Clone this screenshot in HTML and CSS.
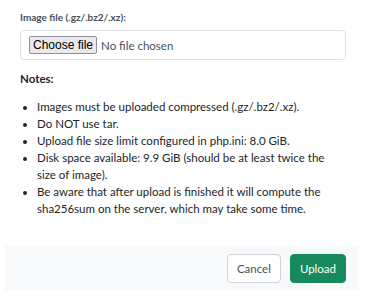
FILE: index.html
```html
<!DOCTYPE html>
<html>
<head>
<meta charset="utf-8">
<link rel="stylesheet" href="styles.css">
</head>
<body>
<div class="modal">
  <div class="modal-body">
    <label class="field-label">Image file (.gz/.bz2/.xz):</label>
    <div class="file-input">
      <span class="file-btn">Choose file</span>
      <span class="file-name">No file chosen</span>
    </div>
    <div class="notes-title">Notes:</div>
    <ul class="notes">
      <li>Images must be uploaded compressed (.gz/.bz2/.xz).</li>
      <li>Do NOT use tar.</li>
      <li>Upload file size limit configured in php.ini: 8.0 GiB.</li>
      <li>Disk space available: 9.9 GiB (should be at least twice the size of image).</li>
      <li>Be aware that after upload is finished it will compute the sha256sum on the server, which may take some time.</li>
    </ul>
  </div>
  <div class="modal-footer">
    <button class="btn btn-cancel">Cancel</button>
    <button class="btn btn-upload">Upload</button>
  </div>
</div>
</body>
</html>
```

FILE: styles.css
```css
html, body {
  margin: 0;
  padding: 0;
  background: #ffffff;
}
body {
  font-family: Lato, "Open Sans", sans-serif;
  color: #212529;
  font-size: 11.5px;
}
.modal {
  width: 353px;
  margin-left: 5px;
}
.modal-body {
  padding: 10px 12px 8px 15px;
}
.field-label {
  display: block;
  font-weight: 700;
  font-size: 10px;
  color: #495057;
  line-height: 14px;
  margin-bottom: 6px;
}
.file-input {
  display: flex;
  align-items: center;
  height: 28px;
  border: 1px solid #dde2e6;
  border-radius: 4px;
  padding: 0 8px;
  gap: 4px;
}
.file-btn {
  font-family: "Liberation Sans", Arial, sans-serif;
  font-size: 12px;
  color: #000;
  background: #e9e9ed;
  border: 1px solid #8f8f9d;
  border-radius: 2px;
  padding: 1px 3px;
  line-height: 14px;
}
.file-name {
  color: #495057;
  font-size: 11.5px;
}
.notes-title {
  font-weight: 700;
  font-size: 11.5px;
  margin-top: 11px;
  line-height: 16px;
}
.notes {
  margin: 11px 0 0 0;
  padding-left: 17px;
  line-height: 17px;
}
.modal-footer {
  margin-top: 21px;
  background: #f8f9fa;
  display: flex;
  justify-content: flex-end;
  gap: 9px;
  padding: 8px 12px 7px 0;
}
.btn {
  font-family: Lato, "Open Sans", sans-serif;
  font-size: 11.5px;
  height: 29px;
  border-radius: 4px;
  padding: 0 9px;
  cursor: pointer;
}
.btn-cancel {
  background: #fff;
  color: #495057;
  border: 1px solid #ced4da;
}
.btn-upload {
  background: #168a5c;
  color: #fff;
  border: 1px solid #168a5c;
}
```
